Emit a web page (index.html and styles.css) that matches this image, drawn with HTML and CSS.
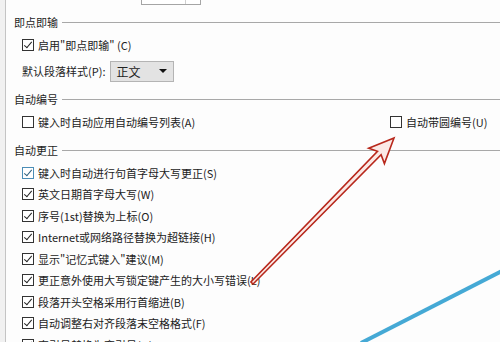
FILE: index.html
```html
<!DOCTYPE html>
<html lang="zh-CN">
<head>
    <meta charset="UTF-8">
    <meta name="viewport" content="width=device-width, initial-scale=1.0">
    <title>自动更正选项</title>
    <link rel="stylesheet" href="styles.css">
</head>
<body>
    <div class="window">
        <div class="edge"></div>
        <div class="pane">
            <div class="spin-row">
                <div class="spin"><span class="spin-btn"></span></div>
            </div>

            <div class="group-title"><span>即点即输</span></div>
            <div class="group-body">
                <label class="row"><span class="box checked"></span>启用"即点即输" (C)</label>
                <div class="row row-select">
                    <span>默认段落样式(P):</span>
                    <div class="select"><span>正文</span><span class="caret"></span></div>
                </div>
            </div>

            <div class="group-title"><span>自动编号</span></div>
            <div class="group-body two-col">
                <label class="row"><span class="box"></span>键入时自动应用自动编号列表(A)</label>
                <label class="row"><span class="box"></span>自动带圆编号(U)</label>
            </div>

            <div class="group-title"><span>自动更正</span></div>
            <div class="group-body list">
                <label class="row"><span class="box checked focus"></span>键入时自动进行句首字母大写更正(S)</label>
                <label class="row"><span class="box checked"></span>英文日期首字母大写(W)</label>
                <label class="row"><span class="box checked"></span>序号(1st)替换为上标(O)</label>
                <label class="row"><span class="box checked"></span>Internet或网络路径替换为超链接(H)</label>
                <label class="row"><span class="box checked"></span>显示"记忆式键入"建议(M)</label>
                <label class="row"><span class="box checked"></span>更正意外使用大写锁定键产生的大小写错误(L)</label>
                <label class="row"><span class="box checked"></span>段落开头空格采用行首缩进(B)</label>
                <label class="row"><span class="box checked"></span>自动调整右对齐段落末空格格式(F)</label>
                <label class="row"><span class="box checked"></span>直引号替换为弯引号(Q)</label>
            </div>
        </div>

        <!-- 截图上的标注箭头 -->
        <svg class="marks" width="500" height="342" viewBox="0 0 500 342">
            <line x1="361" y1="343" x2="502" y2="271" stroke="#45a9d5" stroke-width="4"/>
            <polygon points="394,138 368.7,148.2 377.5,151.3 250.9,282 253.1,284 381.1,154.8 384.4,163.6"
                     fill="#fbe9e6" stroke="#b8281c" stroke-width="1.6" stroke-linejoin="miter"/>
        </svg>
    </div>
</body>
</html>
```

FILE: styles.css
```css
/* 基础样式 */
body {
    margin: 0;
    font-family: "Noto Sans CJK SC", "Noto Sans", sans-serif;
    font-size: 11px;
    color: #222;
    background: #fdfdfd;
    overflow: hidden;
}

.window {
    position: relative;
    display: flex;
    width: 500px;
    height: 342px;
    overflow: hidden;
}

/* 左边框 */
.edge {
    width: 5px;
    background: #f1f1f1;
    border-right: 1px solid #c4c4c4;
}

.pane {
    flex: 1;
    padding-left: 8px;
    background: #fdfdfd;
}

/* 顶部被截掉的数字框 */
.spin-row {
    display: flex;
    align-items: flex-end;
    height: 5px;
    padding-left: 127px;
}

.spin {
    display: flex;
    justify-content: flex-end;
    width: 60px;
    height: 20px;
    flex: none;
    box-sizing: border-box;
    border: 1px solid #a5a5a5;
    background: #fff;
}

.spin-btn {
    width: 14px;
    border-left: 1px solid #d0d0d0;
}

/* 分组标题 */
.group-title {
    display: flex;
    align-items: center;
    gap: 4px;
    height: 16px;
    margin-top: 9px;
    line-height: 16px;
    color: #1e1e1e;
}

.group-title::after {
    content: "";
    flex: 1;
    border-top: 1px solid #a8a8a8;
}

.group-body {
    display: flex;
    flex-direction: column;
    padding: 4px 0 0 8px;
}

.two-col {
    display: grid;
    grid-template-columns: 1fr 110px;
}

/* 行 */
.row {
    display: flex;
    align-items: center;
    gap: 4px;
    height: 22px;
    white-space: nowrap;
}

.list .row {
    height: 21.5px;
}

.row-select {
    margin-top: 4px;
}

/* 复选框 */
.box {
    position: relative;
    width: 12px;
    height: 12px;
    flex: none;
    box-sizing: border-box;
    border: 1px solid #333;
    background: #fff;
}

.box.checked::after {
    content: "";
    position: absolute;
    left: 3px;
    top: 0px;
    width: 3px;
    height: 7px;
    border-right: 1.3px solid #222;
    border-bottom: 1.3px solid #222;
    transform: rotate(40deg);
}

.box.focus {
    border-color: #4b8db6;
}

.box.focus::after {
    border-color: #2c5f7e;
}

/* 下拉框 */
.select {
    display: flex;
    align-items: center;
    justify-content: space-between;
    width: 64px;
    height: 21px;
    margin-left: 1px;
    padding: 0 6px 0 5px;
    box-sizing: border-box;
    border: 1px solid #b4b4b4;
    background: #e3e3e3;
    font-size: 12px;
}

.caret {
    width: 0;
    height: 0;
    border-left: 4px solid transparent;
    border-right: 4px solid transparent;
    border-top: 4px solid #111;
}

/* 标注 */
.marks {
    position: absolute;
    left: 0;
    top: 0;
    pointer-events: none;
}
```
